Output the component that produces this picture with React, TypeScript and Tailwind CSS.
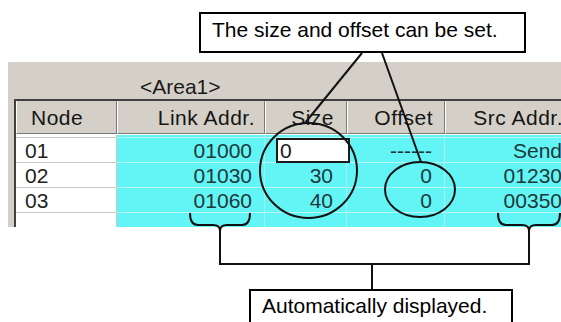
import React from "react";

const rows = [
  { node: "01", link: "01000", size: null, offset: "------", src: "Send" },
  { node: "02", link: "01030", size: "30", offset: "0", src: "01230" },
  { node: "03", link: "01060", size: "40", offset: "0", src: "00350" },
];

const cols = "grid grid-cols-[101px_148px_82px_98px_130px]";
const cyanCell = "h-[25px] border-t border-r border-t-[#b6f6f6] border-r-[#a8eeee] bg-[#63f5f5] flex items-center justify-end pr-[12px] text-[#1c3838]";

function App() {
  return (
    <div className="relative w-[561px] h-[322px] overflow-hidden bg-white font-['Liberation_Sans',Arial,sans-serif] text-black">
      {/* top callout */}
      <div className="ml-[199px] mt-[12px] w-[327px] h-[41px] border-2 border-black pl-[11px] pt-[5px] text-[21px] leading-[21px] whitespace-nowrap">
        The size and offset can be set.
      </div>

      {/* grid panel */}
      <div className="ml-[8px] mt-[9px] w-[553px] h-[165px] bg-[#d4d0c8] overflow-hidden">
        <div className="h-[37px] pl-[132px] pt-[14px] text-[21px] leading-[21px] text-[#1a1a1a]">
          &lt;Area1&gt;
        </div>

        <div className="ml-[6px] w-[577px] border-l-2 border-t-2 border-[#404040]">
          {/* header */}
          <div className={`${cols} h-[33px] text-[21px] leading-[21px] tracking-[0.5px] text-[#151515]`}>
            <div className="border-l border-l-white border-r border-r-[#7a7a7a] border-b border-b-[#7a7a7a] flex items-center pl-[14px]">Node</div>
            <div className="border-l border-l-white border-r border-r-[#7a7a7a] border-b border-b-[#7a7a7a] flex items-center justify-end pr-[9px]">Link Addr.</div>
            <div className="border-l border-l-white border-r border-r-[#7a7a7a] border-b border-b-[#7a7a7a] flex items-center justify-end pr-[12px]">Size</div>
            <div className="border-l border-l-white border-r border-r-[#7a7a7a] border-b border-b-[#7a7a7a] flex items-center justify-end pr-[11px]">Offset</div>
            <div className="border-l border-l-white border-r border-r-[#7a7a7a] border-b border-b-[#7a7a7a] flex items-center justify-end pr-[11px]">Src Addr.</div>
          </div>

          {/* body */}
          <div className="text-[21px] leading-[21px] border-t border-white">
            <div className={`${cols} h-[2px]`}>
              <div className="bg-white border-r border-[#c4c4c4]" />
              <div className="bg-[#63f5f5] border-r border-[#a8eeee]" />
              <div className="bg-[#63f5f5] border-r border-[#a8eeee]" />
              <div className="bg-[#63f5f5] border-r border-[#a8eeee]" />
              <div className="bg-[#63f5f5] border-r border-[#a8eeee]" />
            </div>
            {rows.map((r, i) => (
              <div key={i} className={cols}>
                <div className="h-[25px] border-t border-r border-[#c8c8c8] bg-white flex items-center pl-[9px] text-[#1e1e1e]">{r.node}</div>
                <div className={cyanCell}>{r.link}</div>
                {r.size === null ? (
                  <div className="h-[25px] border-t border-r border-t-[#b6f6f6] border-r-[#a8eeee] bg-[#63f5f5] relative">
                    <div className="absolute left-[11px] top-0 w-[74px] h-[25px] bg-white border-2 border-[#1a1a1a] pl-[2px] flex items-center text-[#1a1a1a]">0</div>
                  </div>
                ) : (
                  <div className={`${cyanCell} pr-[13px]`}>{r.size}</div>
                )}
                <div className={cyanCell}>{r.offset}</div>
                <div className={cyanCell}>{r.src}</div>
              </div>
            ))}
            <div className={cols}>
              <div className="h-[16px] border-t border-r border-[#c8c8c8] bg-white" />
              <div className="h-[16px] border-t border-r border-t-[#b6f6f6] border-r-[#a8eeee] bg-[#63f5f5]" />
              <div className="h-[16px] border-t border-r border-t-[#b6f6f6] border-r-[#a8eeee] bg-[#63f5f5]" />
              <div className="h-[16px] border-t border-r border-t-[#b6f6f6] border-r-[#a8eeee] bg-[#63f5f5]" />
              <div className="h-[16px] border-t border-r border-t-[#b6f6f6] border-r-[#a8eeee] bg-[#63f5f5]" />
            </div>
          </div>
        </div>
      </div>

      {/* bottom callout */}
      <div className="ml-[249px] mt-[62px] w-[264px] h-[45px] border-2 border-black pl-[11px] pt-[4px] text-[21px] leading-[21px] whitespace-nowrap">
        Automatically displayed.
      </div>

      {/* annotation drawing */}
      <svg className="absolute inset-0 pointer-events-none" width="561" height="322" viewBox="0 0 561 322" fill="none" stroke="#111" strokeWidth="2">
        <line x1="362" y1="53" x2="305" y2="123" />
        <line x1="382" y1="53" x2="421" y2="162" />
        <ellipse cx="308.5" cy="170.5" rx="48.5" ry="47.5" />
        <ellipse cx="420" cy="189.5" rx="35" ry="27.5" />
        <path d="M190,213 Q190,225 198,225 L213,225 Q220,225 220,231 Q220,225 227,225 L242,225 Q250,225 250,213" />
        <path d="M498,213 Q498,225 506,225 L522,225 Q529,225 529,231 Q529,225 536,225 L552,225 Q560,225 560,213" />
        <path d="M220,231 V264 H529 V231" />
        <line x1="372" y1="264" x2="372" y2="289" />
      </svg>
    </div>
  );
}

export default App;
